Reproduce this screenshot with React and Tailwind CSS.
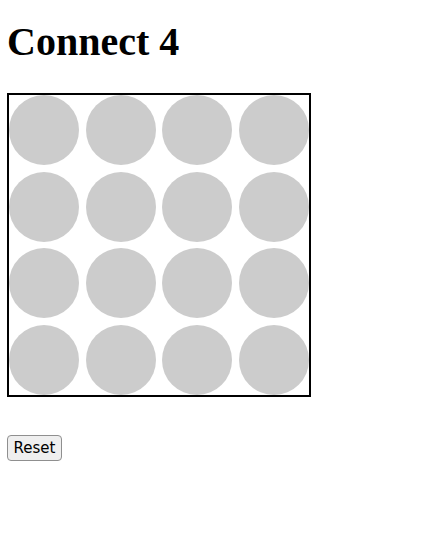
export default function App() {
  const rows = [0, 1, 2, 3];

  return (
    <div className="min-h-screen bg-white pl-[7px] pt-[19px]" style={{ fontFamily: '"Liberation Serif", serif' }}>
      <h1 className="text-[40px] font-bold leading-[46px] text-black">Connect 4</h1>

      <div className="mt-[28px] w-[304px] border-2 border-black">
        <div className="flex h-[300px] flex-col justify-between">
          {rows.map((r) => (
            <div key={r} className="flex justify-between">
              {rows.map((c) => (
                <div key={c} className="h-[70px] w-[70px] rounded-full bg-[#cccccc]" />
              ))}
            </div>
          ))}
        </div>
      </div>

      <button
        className="mt-[38px] flex h-[26px] w-[55px] items-center justify-center rounded-[4px] border border-[#8f8f8f] bg-[#efefef] text-[15px] text-black"
        style={{ fontFamily: '"DejaVu Sans", sans-serif' }}
      >
        Reset
      </button>
    </div>
  );
}
